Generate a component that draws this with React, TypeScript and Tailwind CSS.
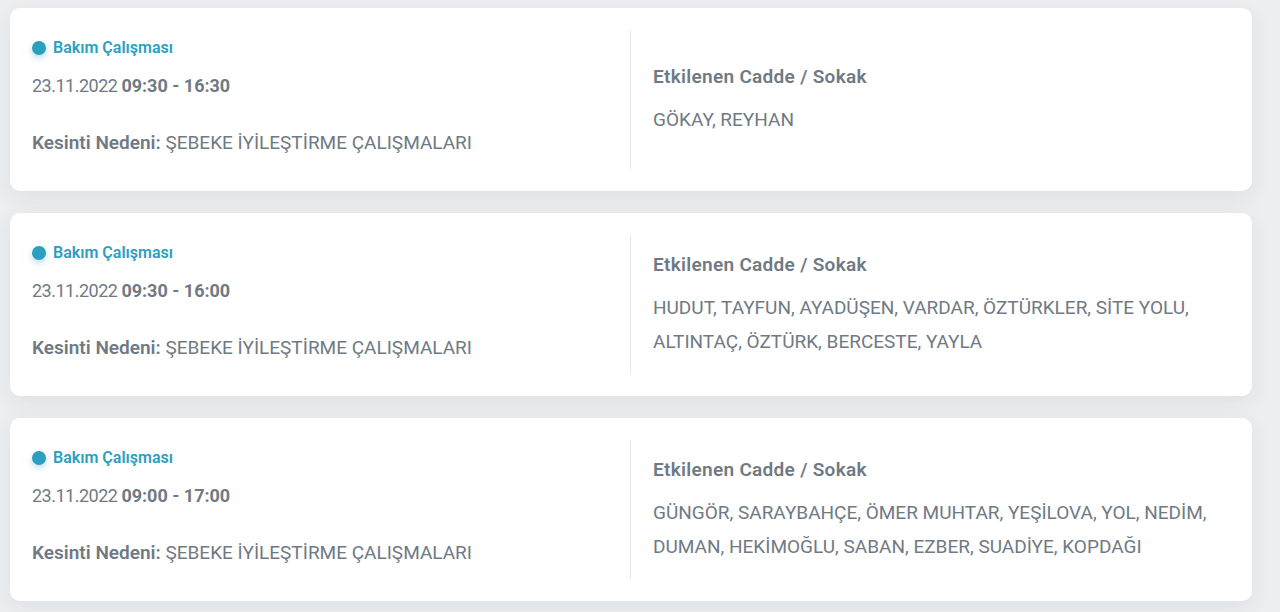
import React from 'react'

interface Outage {
  date: string
  time: string
  reason: string
  streets: string
}

const OUTAGES: Outage[] = [
  {
    date: '23.11.2022',
    time: '09:30 - 16:30',
    reason: 'ŞEBEKE İYİLEŞTİRME ÇALIŞMALARI',
    streets: 'GÖKAY, REYHAN',
  },
  {
    date: '23.11.2022',
    time: '09:30 - 16:00',
    reason: 'ŞEBEKE İYİLEŞTİRME ÇALIŞMALARI',
    streets: 'HUDUT, TAYFUN, AYADÜŞEN, VARDAR, ÖZTÜRKLER, SİTE YOLU, ALTINTAÇ, ÖZTÜRK, BERCESTE, YAYLA',
  },
  {
    date: '23.11.2022',
    time: '09:00 - 17:00',
    reason: 'ŞEBEKE İYİLEŞTİRME ÇALIŞMALARI',
    streets: 'GÜNGÖR, SARAYBAHÇE, ÖMER MUHTAR, YEŞİLOVA, YOL, NEDİM, DUMAN, HEKİMOĞLU, SABAN, EZBER, SUADİYE, KOPDAĞI',
  },
]

function OutageCard({ item }: { item: Outage }) {
  return (
    <div className="grid grid-cols-2 rounded-[10px] bg-white px-[22px] py-[22px] shadow-[0_6px_22px_rgba(40,50,60,0.07)]">
      {/* sol: tür, tarih, neden */}
      <div className="flex flex-col border-r border-[#e6e8ea] pb-3 pt-2">
        <div className="flex h-5 items-center gap-[7px]">
          <span className="h-[14px] w-[14px] rounded-full bg-[#2a9fbf] shadow-[0_3px_6px_rgba(42,159,191,0.35)]" />
          <span className="text-[16px] font-semibold text-[#2a9fbf]">Bakım Çalışması</span>
        </div>
        <div className="mt-[14px] h-7 text-[18px] leading-7 tracking-[-0.5px]">
          {item.date} <span className="font-bold tracking-normal">{item.time}</span>
        </div>
        <div className="mt-[29px] h-7 text-[19px] leading-7">
          <span className="font-semibold">Kesinti Nedeni:</span> {item.reason}
        </div>
      </div>

      {/* sağ: etkilenen sokaklar */}
      <div className="flex flex-col justify-center pl-[22px]">
        <div className="text-[19px] font-semibold leading-7 tracking-[0.3px]">Etkilenen Cadde / Sokak</div>
        <div className="mt-[12px] pr-4 text-[19px] leading-[34px]">{item.streets}</div>
      </div>
    </div>
  )
}

export default function App() {
  return (
    <div
      className="flex min-h-[612px] flex-col gap-[22px] bg-[#eceef0] pb-[10px] pl-[10px] pr-[28px] pt-[8px] text-[#6f7a84]"
      style={{ fontFamily: 'Roboto, "Noto Sans", sans-serif' }}
    >
      {OUTAGES.map((o) => (
        <OutageCard key={o.time} item={o} />
      ))}
    </div>
  )
}
